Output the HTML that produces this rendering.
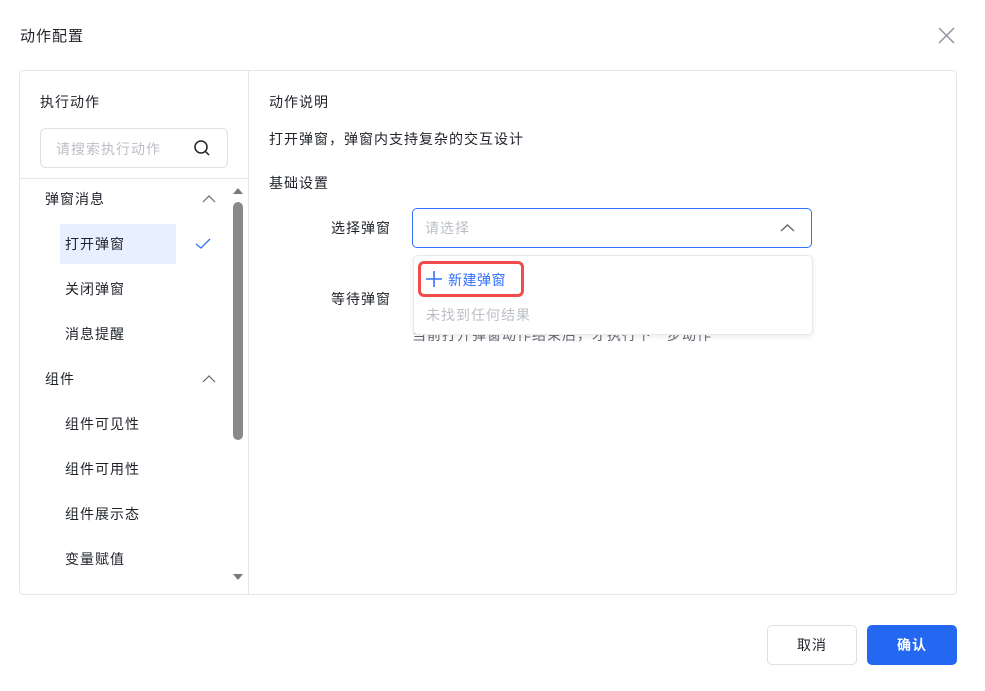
<!DOCTYPE html>
<html><head><meta charset="utf-8"><style>
*{margin:0;padding:0;box-sizing:border-box}
body{width:985px;height:691px;background:#fff;font-family:"Liberation Sans","Noto Sans CJK SC",sans-serif;font-size:14px;color:#1f2329;position:relative;overflow:hidden;letter-spacing:1px}
.a{position:absolute;white-space:nowrap}
</style></head><body>
<div class="a" style="left:20px;top:25px;font-size:15px">动作配置</div>
<svg class="a" style="left:937px;top:26px" width="19" height="19"><path d="M2 2L17 17M17 2L2 17" stroke="#8f959e" stroke-width="1.5"/></svg>
<div class="a" style="left:19px;top:70px;width:938px;height:525px;border:1px solid #e4e6eb;border-radius:4px"></div>
<div class="a" style="left:248px;top:71px;width:1px;height:523px;background:#e4e6eb"></div>
<div class="a" style="left:40px;top:92px">执行动作</div>
<div class="a" style="left:40px;top:128px;width:188px;height:40px;border:1px solid #dee0e3;border-radius:6px"></div>
<div class="a" style="left:56px;top:139px;color:#bbbfc4">请搜索执行动作</div>
<svg class="a" style="left:193px;top:139px" width="18" height="18"><circle cx="8" cy="8" r="6" stroke="#1f2329" stroke-width="1.5" fill="none"/><path d="M12.5 12.5L16 16" stroke="#1f2329" stroke-width="1.5"/></svg>
<div class="a" style="left:20px;top:178px;width:228px;height:1px;background:#e4e6eb"></div>
<div class="a" style="left:60px;top:224px;width:116px;height:40px;background:#e8f0ff"></div>
<div class="a" style="left:45px;top:189px">弹窗消息</div>
<div class="a" style="left:65px;top:234px">打开弹窗</div>
<div class="a" style="left:65px;top:279px">关闭弹窗</div>
<div class="a" style="left:65px;top:324px">消息提醒</div>
<div class="a" style="left:45px;top:369px">组件</div>
<div class="a" style="left:65px;top:414px">组件可见性</div>
<div class="a" style="left:65px;top:459px">组件可用性</div>
<div class="a" style="left:65px;top:504px">组件展示态</div>
<div class="a" style="left:65px;top:549px">变量赋值</div>
<svg class="a" style="left:202px;top:194px" width="14" height="10"><path d="M1 8L7 2L13 8" stroke="#646a73" fill="none" stroke-width="1.2"/></svg>
<svg class="a" style="left:202px;top:374px" width="14" height="10"><path d="M1 8L7 2L13 8" stroke="#646a73" fill="none" stroke-width="1.2"/></svg>
<svg class="a" style="left:195px;top:238px" width="16" height="12"><path d="M1 6L6 10L15 1" stroke="#3370ff" fill="none" stroke-width="1.3"/></svg>
<svg class="a" style="left:231px;top:185px" width="14" height="400"><path d="M2 9L7 3L12 9Z" fill="#7a7a7a"/><rect x="2" y="17" width="10" height="238" rx="5" fill="#8a8a8a"/><path d="M2 389L7 395L12 389Z" fill="#7a7a7a"/></svg>
<div class="a" style="left:269px;top:92px">动作说明</div>
<div class="a" style="left:269px;top:129px;color:#1f2329">打开弹窗，弹窗内支持复杂的交互设计</div>
<div class="a" style="left:269px;top:173px">基础设置</div>
<div class="a" style="left:331px;top:218px;color:#1f2329">选择弹窗</div>
<div class="a" style="left:331px;top:289px;color:#1f2329">等待弹窗</div>
<div class="a" style="left:412px;top:325px;color:#646a73">当前打开弹窗动作结束后，才执行下一步动作</div>
<div class="a" style="left:412px;top:208px;width:400px;height:40px;border:1px solid #3370ff;border-radius:5px;background:#fff"></div>
<div class="a" style="left:425px;top:218px;color:#bbbfc4">请选择</div>
<svg class="a" style="left:780px;top:223px" width="15" height="10"><path d="M1 8L7.5 2L14 8" stroke="#646a73" fill="none" stroke-width="1.4"/></svg>
<div class="a" style="left:413px;top:255px;width:400px;height:80px;border:1px solid #e8e9eb;border-radius:5px;background:#fff;box-shadow:0 2px 6px rgba(0,0,0,.08)"></div>
<div class="a" style="left:418px;top:261px;width:106px;height:36px;border:3px solid #f24b4b;border-radius:6px"></div>
<svg class="a" style="left:425px;top:270px" width="18" height="18"><path d="M9 1V17M1 9H17" stroke="#3370ff" stroke-width="1.6"/></svg>
<div class="a" style="left:448px;top:270px;color:#3370ff;letter-spacing:0.5px">新建弹窗</div>
<div class="a" style="left:426px;top:305px;color:#bbbfc4">未找到任何结果</div>
<div class="a" style="left:767px;top:625px;width:90px;height:40px;border:1px solid #dee0e3;border-radius:5px;text-align:center;line-height:38px">取消</div>
<div class="a" style="left:867px;top:625px;width:90px;height:40px;background:#2468f2;border-radius:5px;text-align:center;line-height:40px;color:#fff;font-weight:bold">确认</div>
</body></html>
